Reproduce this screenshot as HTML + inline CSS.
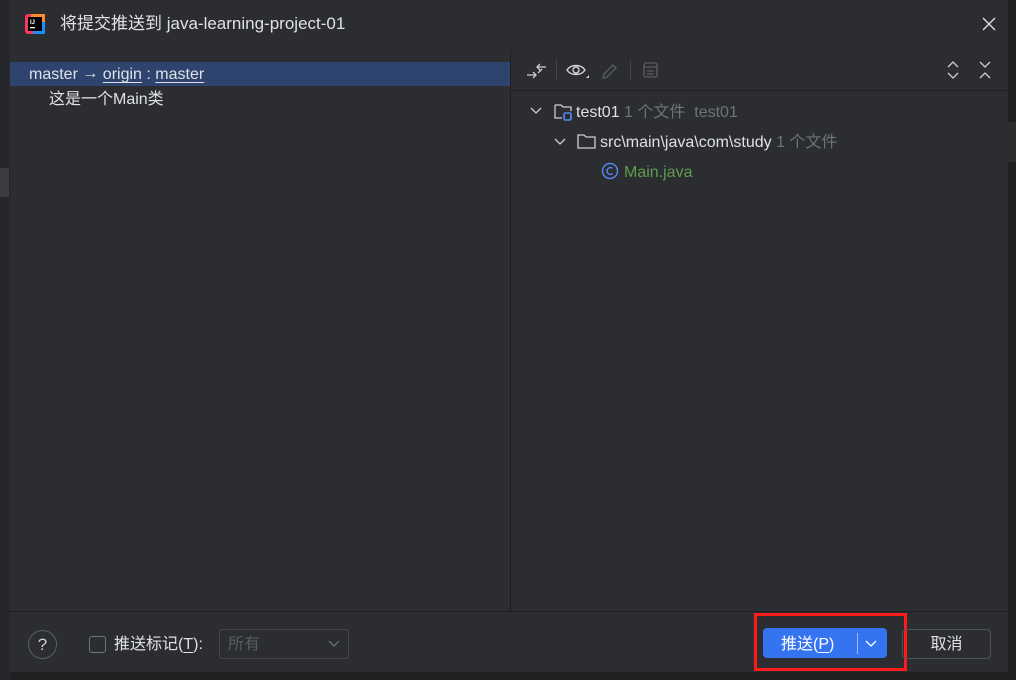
<!DOCTYPE html>
<html><head><meta charset="utf-8"><style>
*{margin:0;padding:0;box-sizing:border-box}
body{width:1016px;height:680px;background:#1f2022;position:relative;overflow:hidden;font-family:"Liberation Sans","Noto Sans CJK SC",sans-serif;font-size:16px;color:#dfe1e5}
.abs{position:absolute;white-space:nowrap;line-height:20px}
u{text-decoration:underline;text-underline-offset:3px}
</style></head><body>
<div class="abs" style="left:0;top:0;width:10px;height:680px;background:#26272b"></div>
<div class="abs" style="left:0;top:168px;width:9px;height:29px;background:#3a3c40"></div>
<div class="abs" style="left:1008px;top:122px;width:8px;height:40px;background:#2b2d30"></div>
<div class="abs" style="left:10px;top:0;width:998px;height:672px;background:#2b2d30"></div>
<!-- title -->
<svg class="abs" style="left:25px;top:14px" width="20" height="20" viewBox="0 0 20 20"><rect x="0" y="0" width="20" height="20" rx="3" fill="#f9375f"/><rect x="6" y="0" width="14" height="12" fill="#fe8a2a"/><rect x="8" y="8" width="12" height="12" fill="#1a8dff"/><rect x="3" y="3" width="14" height="14" fill="#000"/><text x="5" y="10" font-size="6" fill="#fff" font-family="Liberation Sans" font-weight="bold">IJ</text><rect x="5" y="13" width="5" height="1.3" fill="#fff"/></svg>
<div class="abs" style="left:60px;top:14px;font-size:17px;color:#dfe1e5">将提交推送到 java-learning-project-01</div>
<svg class="abs" style="left:982px;top:17px" width="14" height="14"><path d="M1 1L13 13M13 1L1 13" stroke="#dfe1e5" stroke-width="1.3"/></svg>
<!-- panels -->
<div class="abs" style="left:510px;top:50px;width:1px;height:561px;background:#1e1f22"></div>
<div class="abs" style="left:511px;top:90px;width:497px;height:1px;background:#1e1f22"></div>
<div class="abs" style="left:10px;top:611px;width:998px;height:1px;background:#1e1f22"></div>
<div class="abs" style="left:10px;top:62px;width:500px;height:24px;background:#2e436e"></div>
<div class="abs" style="left:29px;top:65px">master <span style="position:relative;top:-1px">→</span> <u>origin</u> : <u>master</u></div>
<div class="abs" style="left:49px;top:90px">这是一个Main类</div>
<!-- toolbar -->
<svg class="abs" style="left:525px;top:60px" width="24" height="22" viewBox="0 0 24 22" fill="none" stroke="#ced0d6" stroke-width="1.3"><path d="M2 15H11M8 12L11 15L8 18"/><path d="M21 7H12M15 4L12 7L15 10"/><path d="M13 13L17 9"/></svg>
<div class="abs" style="left:556px;top:60px;width:1px;height:20px;background:#43454a"></div>
<svg class="abs" style="left:566px;top:61px" width="24" height="20" viewBox="0 0 24 20" fill="none" stroke="#ced0d6" stroke-width="1.4"><path d="M1 9C5 3 15 3 19 9C15 15 5 15 1 9Z"/><circle cx="10" cy="9" r="3"/><path d="M20 17L23 17L23 14Z" fill="#ced0d6" stroke="none"/></svg>
<svg class="abs" style="left:600px;top:61px" width="20" height="20" viewBox="0 0 20 20" fill="none" stroke="#5a5d63" stroke-width="1.3"><path d="M3 17L4 13L13 4L16 7L7 16Z"/></svg>
<div class="abs" style="left:630px;top:60px;width:1px;height:20px;background:#43454a"></div>
<svg class="abs" style="left:642px;top:61px" width="18" height="18" viewBox="0 0 18 18" fill="none" stroke="#5a5d63" stroke-width="1.3"><rect x="2" y="2" width="13" height="14" rx="2"/><path d="M2 6H15M5 10H12M5 13H12"/></svg>
<svg class="abs" style="left:946px;top:61px" width="14" height="18" viewBox="0 0 14 18" fill="none" stroke="#ced0d6" stroke-width="1.3"><path d="M2 6L7 1L12 6M2 12L7 17L12 12"/></svg>
<svg class="abs" style="left:978px;top:61px" width="14" height="18" viewBox="0 0 14 18" fill="none" stroke="#ced0d6" stroke-width="1.3"><path d="M2 1L7 6L12 1M2 17L7 12L12 17"/></svg>
<!-- tree -->
<svg class="abs" style="left:530px;top:106px" width="12" height="10"><path d="M1 2L6 7L11 2" fill="none" stroke="#ced0d6" stroke-width="1.3"/></svg>
<svg class="abs" style="left:554px;top:102px" width="20" height="20" viewBox="0 0 20 20" fill="none" stroke="#ced0d6" stroke-width="1.3"><path d="M1 3H7L9 5H17V9M1 3V16H8"/><rect x="10" y="11" width="7" height="7" rx="1.5" stroke="#548af7" stroke-width="1.6"/></svg>
<div class="abs" style="left:576px;top:103px">test01 <span style="color:#6f737a">1 个文件&nbsp; test01</span></div>
<svg class="abs" style="left:554px;top:137px" width="12" height="10"><path d="M1 2L6 7L11 2" fill="none" stroke="#ced0d6" stroke-width="1.3"/></svg>
<svg class="abs" style="left:577px;top:132px" width="20" height="20" viewBox="0 0 20 20" fill="none" stroke="#ced0d6" stroke-width="1.3"><path d="M1 3H7L9 5H18V16H1Z"/></svg>
<div class="abs" style="left:600px;top:133px">src\main\java\com\study <span style="color:#6f737a">1 个文件</span></div>
<svg class="abs" style="left:601px;top:162px" width="18" height="18" viewBox="0 0 18 18" fill="none" stroke="#548af7" stroke-width="1.4"><circle cx="9" cy="9" r="7.5"/><path d="M11.5 6.3A3.4 3.4 0 1 0 11.5 11.7"/></svg>
<div class="abs" style="left:624px;top:163px;color:#5e9c4f">Main.java</div>
<!-- footer -->
<div class="abs" style="left:28px;top:630px;width:29px;height:29px;border:1px solid #5a5d63;border-radius:50%;text-align:center;line-height:27px;font-size:17px;color:#ced0d6">?</div>
<div class="abs" style="left:89px;top:636px;width:17px;height:17px;border:1px solid #6f737a;border-radius:3px"></div>
<div class="abs" style="left:114px;top:635px">推送标记(<u>T</u>):</div>
<div class="abs" style="left:219px;top:629px;width:130px;height:30px;border:1px solid #43454a;border-radius:4px;color:#5a5d63;padding:5px 0 0 8px">所有</div>
<svg class="abs" style="left:328px;top:640px" width="12" height="8"><path d="M1 1L6 6L11 1" fill="none" stroke="#6f737a" stroke-width="1.2"/></svg>
<div class="abs" style="left:754px;top:613px;width:153px;height:58px;border:3px solid #ff1a1a"></div>
<div class="abs" style="left:763px;top:628px;width:124px;height:30px;background:#3574f0;border-radius:4px"></div>
<div class="abs" style="left:781px;top:635px;color:#fff">推送(<u>P</u>)</div>
<div class="abs" style="left:857px;top:633px;width:1px;height:21px;background:#9bb9f6"></div>
<svg class="abs" style="left:865px;top:640px" width="12" height="8"><path d="M1 1L6 6L11 1" fill="none" stroke="#fff" stroke-width="1.3"/></svg>
<div class="abs" style="left:902px;top:629px;width:89px;height:30px;border:1px solid #4e5157;border-radius:4px;text-align:center;line-height:29px;color:#dfe1e5">取消</div>
</body></html>
